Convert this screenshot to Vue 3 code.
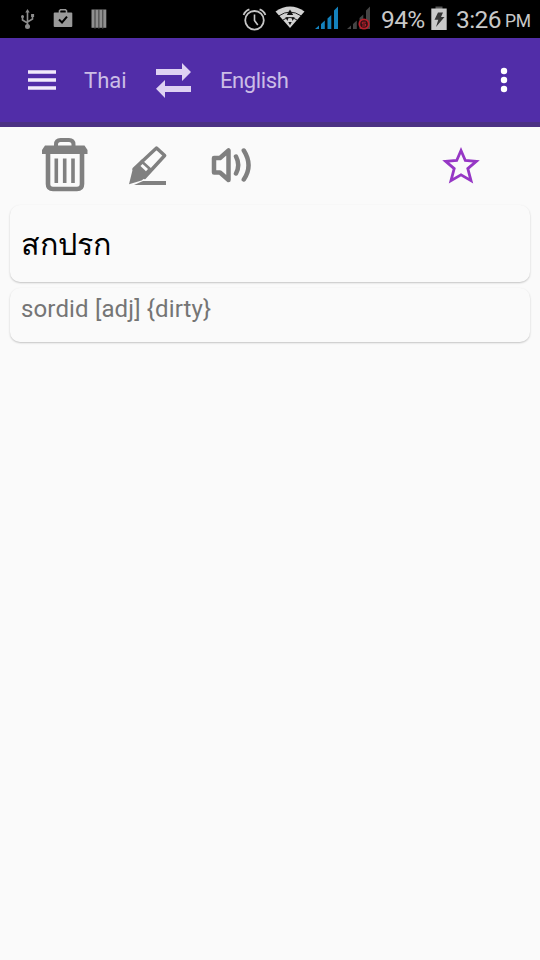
<script setup>
import { ref } from 'vue';

const origem = ref('Thai');
const destino = ref('English');
const favorito = ref(false);

const palavra = ref('สกปรก');
const traducao = ref('sordid [adj] {dirty}');

const inverter = () => {
	[origem.value, destino.value] = [destino.value, origem.value];
};
</script>

<template>
	<main>
		<div class="status">
			<svg class="usb" width="16" height="22" viewBox="20 8 16 22">
				<path d="M27.5 12v14M27.5 23l-5-3v-4M27.5 22l5-3v-4" fill="none" stroke="#8c8c8c" stroke-width="1.6" />
				<path d="M27.5 9l2.2 3.5h-4.4z" fill="#8c8c8c" />
				<circle cx="27.5" cy="26.5" r="2.5" fill="#8c8c8c" />
				<circle cx="22.5" cy="16.5" r="1.5" fill="#8c8c8c" />
				<path d="M31.1 14h3v3h-3z" fill="#8c8c8c" />
			</svg>
			<svg class="bag" width="20" height="20" viewBox="53 8 20 20">
				<path d="M59.5 13v-2.2l1-1h5l1 1V13" fill="none" stroke="#999" stroke-width="1.6" />
				<rect x="53.7" y="12.5" width="18.6" height="14.5" rx="1" fill="#999" />
				<path d="M59 19.5l3 3 5-5.8" fill="none" stroke="#000" stroke-width="2" />
			</svg>
			<svg class="bars" width="17" height="20" viewBox="91 9 17 20">
				<path d="M91.5 9.5h14.8v18.3H91.5z" fill="#8f8f8f" />
				<path d="M95 9v20M98.9 9v20M102.8 9v20" stroke="#3c3c3c" />
			</svg>
			<svg class="alarm" width="26" height="26" viewBox="242 6 26 26">
				<g fill="none" stroke="#c6c6c6">
					<circle cx="254.5" cy="20.3" r="9.3" stroke-width="1.8" />
					<path d="M254.5 14.5v6l3.3 4.5" stroke-width="1.6" />
					<path d="M243.6 15q1.4-4 5.8-5.6M265.4 15q-1.4-4-5.8-5.6" stroke-width="1.8" />
				</g>
			</svg>
			<svg class="wifi" width="30" height="24" viewBox="275 6 30 24">
				<path d="M275.5 11.5q14.500-10 29 0L290 28z" fill="#d2d2d2" />
				<path d="M279 15.800q11-7.500 22 0M283 20q7-5 14 0" fill="none" stroke="#222" stroke-width="1" />
				<path d="M290 9.500l3.200 5.500h-6.400zM285.300 17.200h3.300l-1.200 3.800zM294.700 17.200h-3.300l1.200 3.800zM288.300 22h3.400l-1.700 3.200z" fill="#111" />
			</svg>
			<svg class="sinal" width="26" height="24" viewBox="314 6 26 24">
				<path d="M315 29l4-3.500V29zM321 24l3.800-3.500V29H321zM327.500 18.500l3.800-3.500v14h-3.800zM334 10.500l4-4V29h-4z" fill="#1482bd" />
			</svg>
			<svg class="sinal-off" width="27" height="25" viewBox="345 6 27 25">
				<path d="M347 29l4-3.500V29zM353 24l3.800-3.500V29H353zM359.500 18l3.800-3.500V29h-3.800zM366 10.500l4-4V29h-4z" fill="#454545" />
				<circle cx="364" cy="24" r="4.700" fill="#2a1114" stroke="#b81f2b" stroke-width="1.800" />
				<path d="M365.800 22.200h-3.500v1.800h3.300v2h-3.500" fill="none" stroke="#b81f2b" stroke-width="1" />
			</svg>
			<span class="carga">94%</span>
			<svg class="bateria" width="16" height="24" viewBox="431 6 16 24">
				<path d="M435.500 6.500h7V9h-7z" fill="#555" />
				<path d="M431.300 8.500h15.400V30h-15.400z" fill="#cacaca" />
				<path d="M438 12.500h5l-2 4.500h3.500l-8.500 10 2.300-7.200h-3.800z" fill="#353535" />
			</svg>
			<span class="hora">3:26</span>
			<span class="periodo">PM</span>
		</div>

		<header>
			<svg class="menu" width="28" height="22" viewBox="0 0 28 22">
				<path d="M0 3h28M0 11h28M0 19h28" stroke="#f1eafb" stroke-width="3.400" />
			</svg>
			<span class="idioma origem">{{ origem }}</span>
			<svg class="troca" width="36" height="36" viewBox="155 62 36 36" @click="inverter">
				<path d="M156 69h26v-6l9 9-9 9v-6h-26z" fill="#ded2f2" />
				<path d="M191 86h-26v-6l-9 8.800 9 9.200v-6h26z" fill="#ded2f2" />
			</svg>
			<span class="idioma destino">{{ destino }}</span>
			<svg class="mais" width="8" height="26" viewBox="0 0 8 26">
				<circle cx="4" cy="4" r="3.200" fill="#fff" />
				<circle cx="4" cy="13" r="3.200" fill="#fff" />
				<circle cx="4" cy="22" r="3.200" fill="#fff" />
			</svg>
		</header>

		<nav>
			<svg class="lixeira" width="48" height="56" viewBox="41 137 48 56">
				<path d="M48 152v32q0 5 5 5h24q5 0 5-5V152" fill="none" stroke="#808080" stroke-width="4.600" />
				<path d="M42 154v-4l3-4.500h39.500l3 4.500v4z" fill="#808080" />
				<path d="M56 147.500v-3q0-4.500 4.500-4.500h8.500q4.500 0 4.500 4.500v3" fill="none" stroke="#808080" stroke-width="4" />
				<path d="M56.300 158.500v24.500M64.700 158.500v24.500M73 158.500v24.500" stroke="#808080" stroke-width="3.600" />
			</svg>
			<svg class="lapis" width="40" height="42" viewBox="128 145 40 42">
				<path d="M156.500 148l8.200 7.500-20.200 22-10.500-8.500z" fill="none" stroke="#808080" stroke-width="3.400" stroke-linejoin="round" />
				<path d="M133 168l12 10-3.500 2.500-12.500 3.800zM134 168.500l7.500-9 10.500 9.500-7.500 8.500z" fill="#808080" />
				<path d="M141.500 165l5.500 5.200" stroke="#fafafa" stroke-width="3" />
				<path d="M134 185l9-4h23v4z" fill="#808080" />
			</svg>
			<svg class="som" width="42" height="38" viewBox="210 146 42 38">
				<g fill="none" stroke="#808080" stroke-width="4.500" stroke-linecap="round" stroke-linejoin="round">
					<path d="M228.500 150.500v29.500l-8.500-7.500h-6v-14.500h6z" />
					<path d="M236 156.500q4.500 8.500 0 17M243.800 150.500q9.500 15 0 29" />
				</g>
			</svg>
			<svg class="estrela" width="38" height="38" viewBox="442 146 38 38" @click="favorito = !favorito">
				<path
					d="M461 150.500l4.300 10 11 .9-8.500 7.200 3.200 12-10-5.800-10 5.800 3.200-12-8.500-7.200 11-.9z"
					:fill="favorito ? '#9637c5' : 'none'"
					stroke="#9637c5"
					stroke-width="2.800"
				/>
			</svg>
		</nav>

		<section class="card palavra">{{ palavra }}</section>
		<section class="card traducao">{{ traducao }}</section>
	</main>
</template>

<style>
body {
	background: #fafafa;
}
</style>

<style scoped>
main {
	height: 960px;
	background: #fafafa;
	font-family: Roboto, 'Noto Sans', sans-serif;
	overflow: hidden;
}

svg {
	display: block;
	flex: none;
}

.status {
	height: 38px;
	display: flex;
	align-items: flex-start;
	box-sizing: border-box;
	padding: 6px 0 0 20px;
	background: #000;
	color: #c8c8c8;
	white-space: nowrap;
}

.usb {
	margin-top: 2px;
}

.bag {
	margin: 2px 0 0 17px;
}

.bars {
	margin: 3px 0 0 18px;
}

.alarm {
	margin-left: 134px;
}

.wifi {
	margin-left: 7px;
}

.sinal {
	margin-left: 9px;
}

.sinal-off {
	margin-left: 5px;
}

.carga,
.hora {
	font-size: 24.5px;
	letter-spacing: -0.6px;
	line-height: 28px;
}

.carga {
	width: 50px;
	margin-left: 9px;
}

.hora {
	width: 49px;
	margin-left: 9px;
}

.periodo {
	font-size: 17.5px;
	letter-spacing: -0.4px;
	line-height: 31px;
}

header {
	height: 89px;
	display: flex;
	align-items: center;
	box-sizing: border-box;
	padding: 0 32px 0 28px;
	border-bottom: 5px solid #4b3184;
	background: #512da8;
}

.menu {
	margin-bottom: 1px;
}

.idioma {
	padding-top: 2px;
	color: #cbbde6;
	font-size: 22px;
	line-height: 26px;
}

.origem {
	width: 71px;
	margin-left: 28px;
}

.destino {
	margin-left: 29px;
	letter-spacing: -0.4px;
}

.mais {
	margin-left: auto;
}

nav {
	height: 78px;
	display: flex;
	align-items: flex-start;
	box-sizing: border-box;
	padding: 10px 60px 0 41px;
}

.lapis {
	margin: 8px 0 0 39px;
}

.som {
	margin: 9px 0 0 42px;
}

.estrela {
	margin: 9px 0 0 auto;
}

.card {
	box-sizing: border-box;
	margin: 0 10px;
	padding-left: 11px;
	border-radius: 10px;
	background: #fafafa;
	box-shadow: 0 1px 2px rgba(0, 0, 0, 0.22);
}

.palavra {
	height: 77px;
	color: #000;
	font-size: 30.4px;
	line-height: 79px;
}

.traducao {
	height: 54px;
	margin-top: 6px;
	color: #757575;
	font-size: 24px;
	letter-spacing: 0.15px;
	line-height: 42px;
}
</style>
